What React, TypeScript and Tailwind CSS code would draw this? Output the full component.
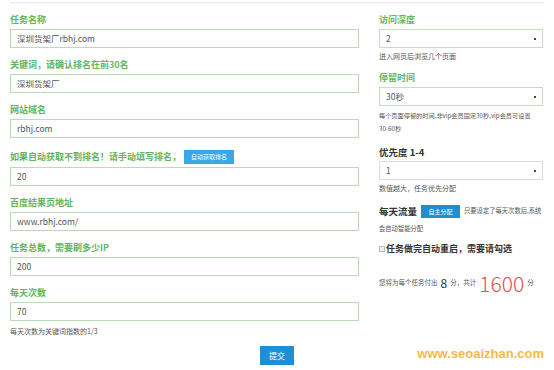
const font = "font-['Microsoft_YaHei','Noto_Sans_CJK_SC',sans-serif]";

function Label({ children }: { children: React.ReactNode }) {
  return (
    <div className="h-[18px] leading-[18px] text-[9px] font-semibold text-[#62b55e]">
      {children}
    </div>
  );
}

function TextInput({ value }: { value: string }) {
  return (
    <div className="h-[19px] border border-[#b9dbb6] bg-white px-[6px] text-[8.5px] leading-[17px] text-[#555]">
      {value}
    </div>
  );
}

function Select({ value, green = true }: { value: string; green?: boolean }) {
  return (
    <div
      className={`flex h-[19px] items-center justify-between border bg-white px-[6px] text-[8.5px] text-[#555] ${
        green ? "border-[#c3dfc0]" : "border-[#dcdcdc]"
      }`}
    >
      <span>{value}</span>
      <span className="h-[2px] w-[2px] bg-[#444]" />
    </div>
  );
}

function Note({ children, className = "" }: { children: React.ReactNode; className?: string }) {
  return <div className={`text-[7px] text-[#555] ${className}`}>{children}</div>;
}

export default function App() {
  return (
    <div className={`relative h-[370px] w-[554px] overflow-hidden bg-white ${font}`}>
      {/* top rule */}
      <div className="mx-[10px] mt-[2px] h-px bg-[#ececec] shadow-[0_1px_1px_rgba(0,0,0,0.04)]" />

      <div className="flex gap-[20px] px-[10px] pt-[8px]">
        {/* Left column */}
        <div className="flex w-[349px] flex-col">
          <div className="mb-[8px]">
            <Label>任务名称</Label>
            <TextInput value="深圳货架厂rbhj.com" />
          </div>
          <div className="mb-[8px]">
            <Label>关键词，请确认排名在前30名</Label>
            <TextInput value="深圳货架厂" />
          </div>
          <div className="mb-[8px]">
            <Label>网站域名</Label>
            <TextInput value="rbhj.com" />
          </div>
          <div className="mb-[8px]">
            <div className="flex h-[21px] items-center gap-[3px] text-[9px] font-semibold text-[#62b55e]">
              <span>如果自动获取不到排名！请手动填写排名，</span>
              <span className="flex h-[14px] w-[50px] items-center justify-center bg-[#3aa8e6] text-[6px] font-normal text-white">
                自动获取排名
              </span>
            </div>
            <TextInput value="20" />
          </div>
          <div className="mb-[8px]">
            <Label>百度结果页地址</Label>
            <TextInput value="www.rbhj.com/" />
          </div>
          <div className="mb-[8px]">
            <Label>任务总数，需要刷多少IP</Label>
            <TextInput value="200" />
          </div>
          <div>
            <Label>每天次数</Label>
            <TextInput value="70" />
          </div>
          <Note className="mt-[5px] leading-[10px] text-[6.5px]">每天次数为关键词指数的1/3</Note>
        </div>

        {/* Right column */}
        <div className="flex w-[164px] flex-col">
          <Label>访问深度</Label>
          <Select value="2" />
          <Note className="mt-[3px] leading-[10px]">进入网页后浏览几个页面</Note>

          <div className="mt-[8px]">
            <Label>停留时间</Label>
            <Select value="30秒" />
          </div>
          <div className="mt-[3px] text-[6.2px] leading-[13px] text-[#555]">
            <div className="whitespace-nowrap">每个页面停留的时间,非vip会员固定30秒,vip会员可设置</div>
            <div>30-60秒</div>
          </div>

          <div className="mt-[8px]">
            <div className="h-[18px] text-[9.5px] font-bold leading-[18px] text-[#333]">优先度 1-4</div>
            <Select value="1" green={false} />
          </div>
          <Note className="mt-[3px] leading-[10px]">数值越大，任务优先分配</Note>

          <div className="mt-[9px] text-[6.3px] text-[#555]">
            <div className="flex h-[18px] items-center">
              <span className="text-[9.5px] font-bold text-[#333]">每天流量</span>
              <span className="mx-[4px] flex h-[13px] w-[39px] items-center justify-center bg-[#1f8fd4] text-[6px] text-white">
                自主分配
              </span>
              <span className="whitespace-nowrap">只要设定了每天次数后,系统</span>
            </div>
            <div className="h-[18px] leading-[18px]">会自动智能分配</div>
          </div>

          <div className="mt-[3px] flex h-[16px] items-center gap-[1px] text-[9px] font-bold text-[#333]">
            <span className="h-[6px] w-[6px] border border-[#bbb] bg-[#eee]" />
            <span>任务做完自动重启，需要请勾选</span>
          </div>

          <div className="mt-[14px] flex h-[24px] items-center text-[6.5px] text-[#555]">
            <span>您将为每个任务付出</span>
            <span className="mx-[3px] text-[12px] leading-none text-[#333]">8</span>
            <span>分，共计</span>
            <span className="mx-[3px] text-[21px] font-light leading-none text-[#d9534f]">1600</span>
            <span>分</span>
          </div>
        </div>
      </div>

      {/* submit */}
      <div className="mt-[10px] flex justify-center">
        <button className="h-[19px] w-[34px] bg-[#1f8fd4] text-[8px] text-white">提交</button>
      </div>

      {/* watermark */}
      <div className="absolute bottom-[7px] right-[10px] font-['Liberation_Sans',sans-serif] text-[13px] font-bold text-[#f6b94a]">
        www.seoaizhan.com
      </div>
    </div>
  );
}
